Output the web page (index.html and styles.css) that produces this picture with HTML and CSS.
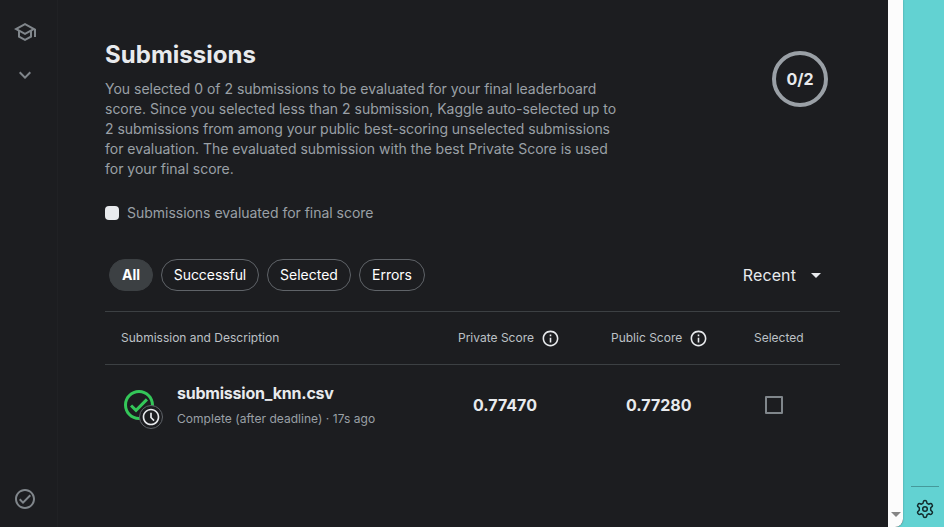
FILE: index.html
```html
<!DOCTYPE html>
<html lang="en">
<head>
<meta charset="utf-8">
<title>Submissions</title>
<link rel="stylesheet" href="styles.css">
</head>
<body>
<div class="window">
  <nav class="sidebar">
    <svg class="icon" width="24" height="24" viewBox="0 0 24 24"><path d="M12 3 1 9l4 2.18v6L12 21l7-3.82v-6l2-1.09V17h2V9L12 3zm6.82 6L12 12.72 5.18 9 12 5.28 18.82 9zM17 15.99l-5 2.73-5-2.73v-3.72L12 15l5-2.73v3.72z"/></svg>
    <svg class="icon" width="24" height="24" viewBox="0 0 24 24"><path d="M16.59 8.59 12 13.17 7.41 8.59 6 10l6 6 6-6z"/></svg>
    <svg class="icon bottom" width="24" height="24" viewBox="0 0 24 24"><path d="M12 2C6.48 2 2 6.48 2 12s4.480 10 10 10 10-4.480 10-10S17.520 2 12 2zm0 18c-4.410 0-8-3.590-8-8s3.590-8 8-8 8 3.590 8 8-3.590 8-8 8zm4.590-12.420L10 14.170l-2.590-2.580L6 13l4 4 8-8z"/></svg>
  </nav>
  <main class="main">
    <header class="intro">
      <div class="copy">
        <h1>Submissions</h1>
        <p>You selected 0 of 2 submissions to be evaluated for your final leaderboard<br>score. Since you selected less than 2 submission, Kaggle auto-selected up to<br><span class="tight">2 submissions from among your public best-scoring unselected submissions</span><br>for evaluation. The evaluated submission with the best Private Score is used<br>for your final score.</p>
      </div>
      <div class="ring">0/2</div>
    </header>
    <div class="legend"><span class="swatch"></span><span class="label">Submissions evaluated for final score</span></div>
    <div class="toolbar">
      <button class="chip active">All</button>
      <button class="chip successful">Successful</button>
      <button class="chip selected">Selected</button>
      <button class="chip errors">Errors</button>
      <div class="sort">Recent<span class="caret"></span></div>
    </div>
    <section class="table">
      <div class="row head">
        <span class="label first">Submission and Description</span>
        <span class="score"><span class="label">Private Score</span><svg width="19" height="19" viewBox="0 0 24 24"><path d="M11 7h2v2h-2zm0 4h2v6h-2zm1-9C6.480 2 2 6.480 2 12s4.480 10 10 10 10-4.480 10-10S17.520 2 12 2zm0 18c-4.410 0-8-3.590-8-8s3.590-8 8-8 8 3.590 8 8-3.590 8-8 8z"/></svg></span>
        <span class="score"><span class="label">Public Score</span><svg width="19" height="19" viewBox="0 0 24 24"><path d="M11 7h2v2h-2zm0 4h2v6h-2zm1-9C6.480 2 2 6.480 2 12s4.480 10 10 10 10-4.480 10-10S17.520 2 12 2zm0 18c-4.410 0-8-3.590-8-8s3.590-8 8-8 8 3.590 8 8-3.590 8-8 8z"/></svg></span>
        <span class="label">Selected</span>
      </div>
      <div class="row item">
        <div class="file">
          <div class="status">
            <svg width="36" height="36" viewBox="0 0 24 24"><path d="M12 2C6.480 2 2 6.480 2 12s4.480 10 10 10 10-4.480 10-10S17.520 2 12 2zm0 18c-4.410 0-8-3.590-8-8s3.590-8 8-8 8 3.590 8 8-3.590 8-8 8zm4.590-12.420L10 14.170l-2.590-2.580L6 13l4 4 8-8z"/></svg>
            <span class="clock"><svg width="20" height="20" viewBox="0 0 24 24"><path d="M11.990 2C6.470 2 2 6.480 2 12s4.470 10 9.990 10C17.520 22 22 17.520 22 12S17.520 2 11.990 2zM12 20c-4.420 0-8-3.580-8-8s3.580-8 8-8 8 3.580 8 8-3.580 8-8 8zM13 7h-2v6l4 4 1.300-1.300L13 12.300z"/></svg></span>
          </div>
          <div class="name">
            <strong>submission_knn.csv</strong>
            <small>Complete (after deadline) · 17s ago</small>
          </div>
        </div>
        <strong class="value">0.77470</strong>
        <strong class="value">0.77280</strong>
        <span class="checkbox"></span>
      </div>
    </section>
  </main>
  <div class="scrollbar"><span class="down"></span></div>
</div>
<aside class="dock">
  <span class="divider"></span>
  <svg width="20" height="20" viewBox="0 0 20 20"><path d="M8.200 3.200Q8.500 1.600 10 1.600t1.800 1.600l.3 1.200 1.500.8 1.300-.5q1.500-.4 2.200.9.800 1.300-.4 2.300l-1 .9v2.400l1 .9q1.200 1 .4 2.300-.7 1.300-2.200.9l-1.300-.5-1.500.8-.3 1.200q-.3 1.600-1.800 1.600t-1.800-1.600l-.3-1.200-1.500-.8-1.300.5q-1.500.4-2.200-.9-.8-1.300.4-2.300l1-.9V8.800l-1-.9q-1.200-1-.4-2.300.7-1.300 2.200-.9l1.300.5 1.500-.8z"/><circle cx="10" cy="10" r="2.300"/></svg>
</aside>
</body>
</html>
```
FILE: styles.css
```css
* { box-sizing: border-box; }
body {
  margin: 0;
  height: 527px;
  display: flex;
  overflow: hidden;
  background: #62d2d2;
  color: #e8eaed;
  font-family: Inter, sans-serif;
  font-size: 14px;
}
h1, p { margin: 0; }
svg { display: block; flex: none; }
.window {
  width: 903px;
  display: flex;
  overflow: hidden;
  border-bottom-right-radius: 8px;
  background: #1c1d20;
  box-shadow: 0 0 2px rgba(0, 0, 0, .3);
}
.sidebar {
  width: 58px;
  padding: 20px 0 16px 13px;
  border-right: 1px solid #202124;
  display: flex;
  flex-direction: column;
  gap: 19px;
}
.icon { fill: #80868b; }
.bottom { margin-top: auto; }
.main { width: 830px; padding: 39px 48px 0 47px; }
.intro { display: flex; justify-content: space-between; height: 140px; }
h1 { font-size: 24px; line-height: 32px; font-weight: 700; letter-spacing: .03px; }
.copy p { margin-top: 8px; line-height: 20px; color: #9aa0a6; white-space: nowrap; letter-spacing: -.007px; }
.tight { letter-spacing: -.035px; }
.ring {
  width: 56px;
  height: 56px;
  margin: 12px 12px 0 0;
  border: 4px solid #9aa0a6;
  border-radius: 50%;
  display: grid;
  place-items: center;
  font-size: 16px;
  font-weight: 700;
}
.legend { margin-top: 24px; height: 20px; display: flex; align-items: center; gap: 8px; color: #9aa0a6; letter-spacing: -.02px; }
.label { padding-bottom: 2px; }
.swatch { width: 14px; height: 14px; border-radius: 4px; background: #e8eaed; }
.toolbar { height: 32px; margin: 36px 0 20px; padding: 0 19px 0 4px; display: flex; gap: 8px; }
.chip {
  height: 32px;
  padding: 0;
  border: 1px solid #5f6368;
  border-radius: 16px;
  background: none;
  color: #fff;
  font: 14px/20px Inter, sans-serif;
}
.active { width: 44px; border-color: #3c4043; background: #3c4043; font-weight: 700; }
.successful { width: 98px; letter-spacing: -.07px; }
.selected { width: 84px; }
.errors { width: 66px; }
.sort { margin-left: auto; display: flex; align-items: center; gap: 15px; font-size: 16px; letter-spacing: .1px; }
.caret { border: 5px solid transparent; border-top-color: #e8eaed; border-bottom: 0; }
.row { display: grid; grid-template-columns: 353px 153px 143px 86px; align-items: center; }
.head {
  height: 54px;
  border-top: 1px solid #3c4043;
  border-bottom: 1px solid #3c4043;
  color: #bdc1c6;
  font-size: 12px;
}
.first { padding-left: 16px; }
.score { display: flex; align-items: center; gap: 7px; }
.score svg { fill: #e8eaed; }
.item { height: 80px; }
.file { display: flex; padding-left: 16px; gap: 16px; }
.status { position: relative; width: 40px; height: 44px; padding-top: 4px; }
.status > svg { fill: #34c759; }
.clock {
  position: absolute;
  left: 18px;
  top: 22px;
  width: 24px;
  height: 24px;
  border: 1px solid #5f6368;
  border-radius: 50%;
  display: grid;
  place-items: center;
  background: #1c1d20;
}
.clock svg { fill: #e8eaed; }
.name strong { display: block; font-size: 16px; line-height: 20px; letter-spacing: -.22px; }
.name small { display: block; margin-top: 8px; font-size: 12px; line-height: 16px; color: #9aa0a6; letter-spacing: .04px; }
.value { padding-left: 15px; font-size: 16px; }
.checkbox { width: 18px; height: 18px; margin-left: 11px; border: 2px solid #80868b; border-radius: 1px; }
.scrollbar { width: 15px; background: #fcfcfc; display: flex; align-items: flex-end; justify-content: center; padding-bottom: 10px; }
.down { border: 5px solid transparent; border-top-color: #858585; border-bottom: 0; }
.dock { width: 41px; display: flex; flex-direction: column; justify-content: flex-end; align-items: center; padding: 0 2px 8px 5px; gap: 12px; }
.divider { width: 28px; height: 1px; background: #45999a; }
.dock svg { fill: none; stroke: #122c2d; stroke-width: 1.500; stroke-linejoin: round; }
```
